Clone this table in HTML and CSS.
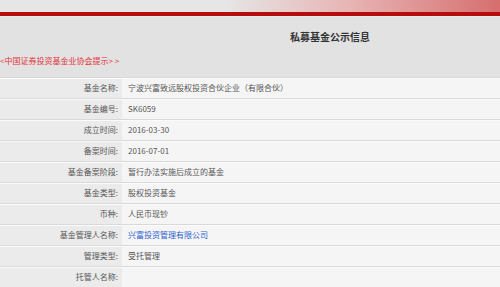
FILE: index.html
```html
<!DOCTYPE html>
<html lang="zh-CN">
<head>
<meta charset="utf-8">
<title>私募基金公示信息</title>
<link rel="stylesheet" href="styles.css">
</head>
<body>
<div class="topbar"></div>
<div class="redline"></div>
<div class="head">
  <h1 class="title">私募基金公示信息</h1>
  <a class="notice" href="#">&lt;中国证券投资基金业协会提示&gt; &gt;</a>
</div>
<table class="info">
  <tr><th>基金名称:</th><td>宁波兴富致远股权投资合伙企业（有限合伙）</td></tr>
  <tr><th>基金编号:</th><td>SK6059</td></tr>
  <tr><th>成立时间:</th><td>2016-03-30</td></tr>
  <tr><th>备案时间:</th><td>2016-07-01</td></tr>
  <tr><th>基金备案阶段:</th><td>暂行办法实施后成立的基金</td></tr>
  <tr><th>基金类型:</th><td>股权投资基金</td></tr>
  <tr><th>币种:</th><td>人民币现钞</td></tr>
  <tr><th>基金管理人名称:</th><td><a class="link" href="#">兴富投资管理有限公司</a></td></tr>
  <tr><th>管理类型:</th><td>受托管理</td></tr>
  <tr><th>托管人名称:</th><td></td></tr>
</table>
</body>
</html>
```
FILE: styles.css
```css
html, body {
  margin: 0;
  padding: 0;
}
body {
  background: #e2e2e2;
  font-family: "Noto Sans CJK SC", "Liberation Sans", sans-serif;
  color: #555;
  overflow: hidden;
}
.topbar {
  height: 12px;
  background: linear-gradient(to right, #e6e6e6 0%, #e6e6e6 45%, #e8b4b4 70%, #d66e6e 100%);
}
.redline {
  height: 4px;
  background: #b50d0d;
  border-bottom: 1px solid #ececec;
}
.head {
  height: 60px;
}
.title {
  margin: 0;
  padding-top: 13px;
  padding-left: 290px;
  font-size: 10px;
  font-weight: bold;
  color: #333;
  line-height: 14px;
}
.notice {
  display: block;
  margin-top: 12px;
  font-size: 8px;
  line-height: 10px;
  color: #e2343a;
  text-decoration: none;
}
.info {
  border-collapse: collapse;
  width: 500px;
  font-size: 8px;
}
.info th, .info td {
  height: 20px;
  padding: 0;
  border-top: 1px solid #d9d9d9;
  line-height: 20px;
  box-shadow: inset 0 1px 0 #fbfbfb;
}
.info th {
  width: 118px;
  padding-right: 4px;
  text-align: right;
  font-weight: normal;
  background: #ebebeb;
  color: #555;
}
.info td {
  padding-left: 6px;
  background: #f5f5f5;
  color: #555;
}
.link {
  color: #2f5fd0;
  text-decoration: none;
}
```
